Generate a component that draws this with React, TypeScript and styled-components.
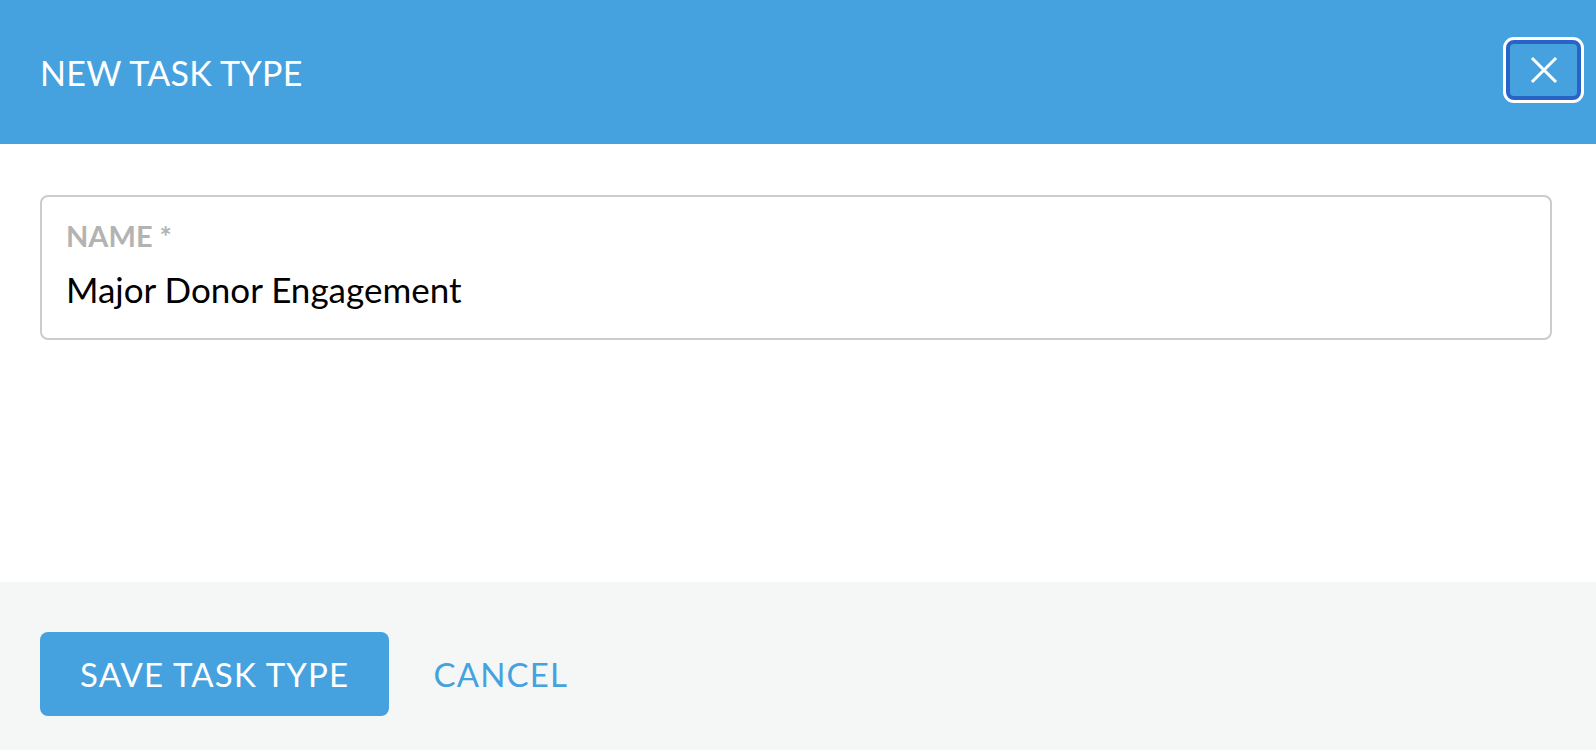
import React, {useState} from 'react';
import styled, {createGlobalStyle} from 'styled-components';

const GlobalStyle = createGlobalStyle`
    html, body {
        margin: 0;
        padding: 0;
        background: #fff;
        font-family: Lato, "Liberation Sans", sans-serif;
    }
`;

const Modal = styled.div`
    width: 1596px;
    height: 750px;
    display: flex;
    flex-direction: column;
    overflow: hidden;
`;

const Header = styled.div`
    height: 144px;
    flex-shrink: 0;
    background-color: #46a2df;
    display: flex;
    align-items: center;
    justify-content: space-between;
    padding: 0 15px 0 40px;
    box-sizing: border-box;
`;

const Title = styled.h1`
    margin: 0;
    color: #fff;
    font-size: 34px;
    font-weight: 400;
    letter-spacing: 0.3px;
`;

const CloseButton = styled.button`
    width: 75px;
    height: 60px;
    margin-bottom: 5px;
    border: 4px solid #2a63c8;
    border-radius: 8px;
    background-color: #46a2df;
    box-shadow: 0 0 0 3px #fff;
    display: flex;
    align-items: center;
    justify-content: center;
    cursor: pointer;
    padding: 0;
`;

const Body = styled.div`
    flex: 1;
    background: #fff;
    padding: 51px 44px 0 40px;
`;

const Field = styled.label`
    display: flex;
    flex-direction: column;
    height: 145px;
    box-sizing: border-box;
    border: 2px solid #cccccc;
    border-radius: 8px;
    padding: 22px 24px 0 24px;
`;

const FieldLabel = styled.span`
    color: #b3b3b3;
    font-size: 29px;
    font-weight: 700;
    line-height: 34px;
`;

const FieldInput = styled.input`
    border: none;
    outline: none;
    padding: 0;
    margin-top: 14px;
    font-family: Lato, "Liberation Sans", sans-serif;
    font-size: 35px;
    line-height: 44px;
    color: #000;
    background: transparent;
`;

const Footer = styled.div`
    height: 168px;
    flex-shrink: 0;
    background-color: #f5f7f7;
    display: flex;
    align-items: flex-start;
    gap: 44px;
    padding: 50px 40px 0;
    box-sizing: border-box;
`;

const ActionButton = styled.button<{ $primary?: boolean }>`
    height: 84px;
    padding: 0 ${p => (p.$primary ? '40px' : '0')};
    border: none;
    border-radius: 8px;
    background-color: ${p => (p.$primary ? '#46a2df' : 'transparent')};
    color: ${p => (p.$primary ? '#fff' : '#46a2df')};
    font-family: Lato, "Liberation Sans", sans-serif;
    font-size: 33px;
    letter-spacing: 1.2px;
    cursor: pointer;
`;

const CloseIcon = () => (
    <svg width="28" height="28" viewBox="0 0 28 28" fill="none">
        <path d="M3 3L25 25M25 3L3 25" stroke="#fff" strokeWidth="3" strokeLinecap="square"/>
    </svg>
);

const App = () => {
    const [name, setName] = useState('Major Donor Engagement');

    return (
        <>
            <GlobalStyle/>
            <Modal>
                <Header>
                    <Title>NEW TASK TYPE</Title>
                    <CloseButton aria-label="Close">
                        <CloseIcon/>
                    </CloseButton>
                </Header>
                <Body>
                    <Field>
                        <FieldLabel>NAME *</FieldLabel>
                        <FieldInput value={name} onChange={e => setName(e.target.value)}/>
                    </Field>
                </Body>
                <Footer>
                    <ActionButton $primary>SAVE TASK TYPE</ActionButton>
                    <ActionButton>CANCEL</ActionButton>
                </Footer>
            </Modal>
        </>
    );
};

export default App;
